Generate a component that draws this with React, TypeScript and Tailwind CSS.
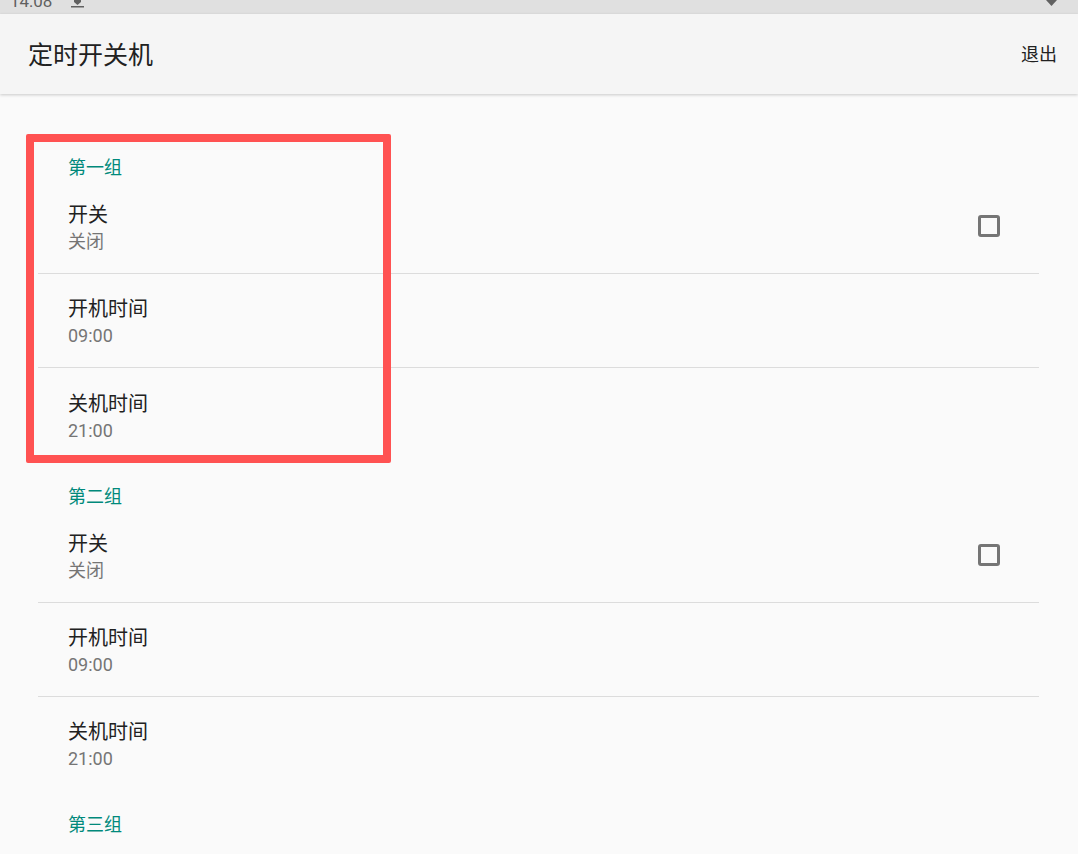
const font = "font-['Roboto','Noto_Sans_CJK_SC',sans-serif]";

type Row = { title: string; value: string; checkbox?: boolean; top: string };

const firstRows: Row[] = [
  { title: "开关", value: "关闭", checkbox: true, top: "pt-[21px]" },
  { title: "开机时间", value: "09:00", top: "pt-[21px]" },
  { title: "关机时间", value: "21:00", top: "pt-[22px]" },
];

const secondRows: Row[] = [
  { title: "开关", value: "关闭", checkbox: true, top: "pt-[21px]" },
  { title: "开机时间", value: "09:00", top: "pt-[21px]" },
  { title: "关机时间", value: "21:00", top: "pt-[21px]" },
];

function PrefRow({ row, last }: { row: Row; last: boolean }) {
  return (
    <div
      className={`flex h-[94px] items-start justify-between pl-[30px] pr-[39px] ${row.top} ${
        last ? "" : "border-b border-[#dcdcdc]"
      }`}
    >
      <div className="flex flex-col">
        <span className="text-[20px] leading-[28px] text-[#212121]">{row.title}</span>
        <span className="text-[18px] leading-[26px] text-[#757575]">{row.value}</span>
      </div>
      {row.checkbox && (
        <div className="mt-[14px] h-[22px] w-[22px] rounded-[3px] border-[3px] border-[#757575]" />
      )}
    </div>
  );
}

function Group({ name, items, height }: { name: string; items: Row[]; height: string }) {
  return (
    <div className={height}>
      <div className="h-[46px] pl-[30px] pt-[21px] text-[18px] leading-[26px] text-[#00897b]">
        {name}
      </div>
      {items.map((r, i) => (
        <PrefRow key={r.title} row={r} last={i === items.length - 1} />
      ))}
    </div>
  );
}

export default function App() {
  return (
    <div className={`relative h-[854px] w-[1078px] overflow-hidden bg-[#fafafa] ${font}`}>
      <div className="relative flex h-[14px] items-start justify-between overflow-hidden bg-[#e0e0e0] pl-[10px] pr-[21px]">
        <div className="flex items-start gap-[19px]">
          <span className="-mt-[10px] text-[17px] leading-[22px] text-[#616161]">14:08</span>
          <svg width="13" height="8" viewBox="0 0 13 8">
            <path d="M3 0 H10 V2 L6.5 5 L3 2 Z" fill="#616161" />
            <rect x="0" y="6" width="13" height="1.5" fill="#616161" />
          </svg>
        </div>
        <svg width="11" height="7" viewBox="0 0 11 7">
          <path d="M0 0 H11 L5.5 6 Z" fill="#616161" />
        </svg>
      </div>

      <div className="relative flex h-[80px] items-center justify-between bg-[#f5f5f5] pl-[28px] pr-[21px] shadow-[0_1px_3px_rgba(0,0,0,0.2)]">
        <span className="pt-[4px] text-[25px] leading-[32px] text-[#212121]">定时开关机</span>
        <span className="pt-[2px] text-[18px] leading-[24px] text-[#212121]">退出</span>
      </div>

      <div className="pl-[38px] pr-[39px] pt-[40px]">
        <Group name="第一组" items={firstRows} height="h-[329px]" />
        <Group name="第二组" items={secondRows} height="h-[328px]" />
        <Group name="第三组" items={[]} height="h-[46px]" />
      </div>

      <div className="absolute left-[26px] top-[134px] h-[329px] w-[365px] rounded-[2px] border-[8px] border-[#ff5252]" />
    </div>
  );
}
